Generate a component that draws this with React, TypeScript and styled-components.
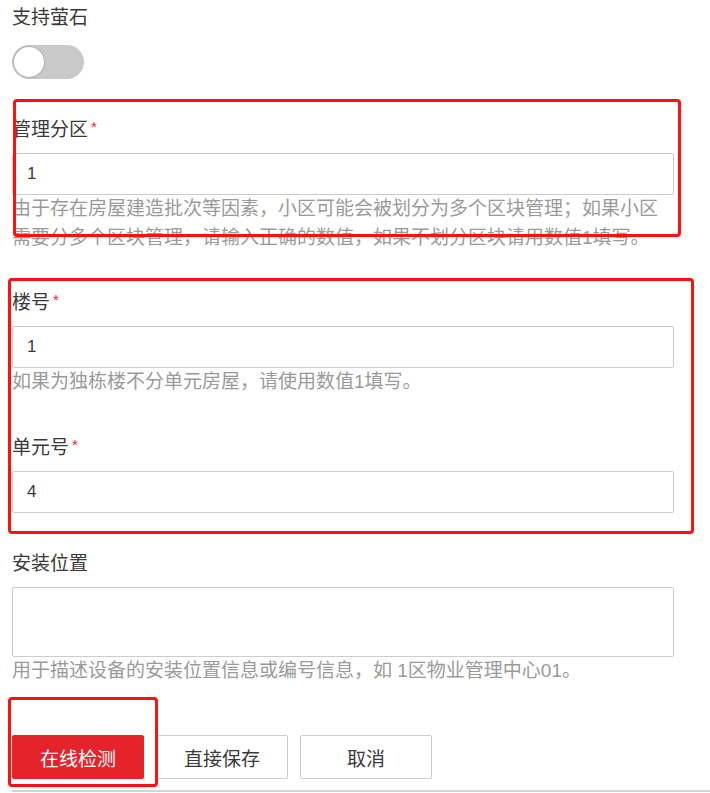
import React, { useState } from 'react';
import styled, { createGlobalStyle } from 'styled-components'

const GlobalStyle = createGlobalStyle`
  html, body {
    margin: 0;
    padding: 0;
    background: #fff;
  }
  body {
    font-family: "Liberation Sans", "Noto Sans CJK SC", sans-serif;
  }
`

const red = '#e5232a'
const textColor = '#3a3a3a'
const helpColor = '#9a9a9a'
const borderColor = '#cccccc'

const Page = styled.div`
  position: relative;
  width: 710px;
  box-sizing: border-box;
  padding: 4px 36px 0 12px;
  color: ${textColor};
`

const FormItem = styled.div`
  margin-bottom: 37px;
`

const Label = styled.div`
  font-size: 19px;
  line-height: 28px;
  height: 28px;
  margin-bottom: 9px;
  color: ${textColor};
`

const Required = styled.span`
  color: #f5222d;
  font-size: 15px;
  line-height: 0;
  margin-left: 3px;
  vertical-align: 4px;
`

const TextInput = styled.input`
  display: block;
  width: 100%;
  height: 42px;
  box-sizing: border-box;
  border: 1px solid ${borderColor};
  border-radius: 2px;
  padding: 0 14px;
  font-family: inherit;
  font-size: 17px;
  color: ${textColor};
  outline: none;
`

const TextArea = styled.textarea`
  display: block;
  width: 100%;
  height: 70px;
  box-sizing: border-box;
  border: 1px solid ${borderColor};
  border-radius: 2px;
  padding: 8px 14px;
  font-family: inherit;
  font-size: 17px;
  resize: none;
  outline: none;
`

const Help = styled.div`
  font-size: 19px;
  line-height: 28.5px;
  color: ${helpColor};
`

const SwitchTrack = styled.button<{ $on: boolean }>`
  display: block;
  margin-top: 13px;
  width: 72px;
  height: 34px;
  border: none;
  border-radius: 17px;
  padding: 2px;
  background: ${({ $on }) => ($on ? red : '#c9c9c9')};
  cursor: pointer;
  box-sizing: border-box;
`

const SwitchKnob = styled.span<{ $on: boolean }>`
  display: block;
  width: 30px;
  height: 30px;
  border-radius: 50%;
  background: #fff;
  box-shadow: 0 0 1px 1px rgba(0, 0, 0, 0.12);
  transform: translateX(${({ $on }) => ($on ? '38px' : '0')});
  transition: transform 0.2s;
`

const ButtonRow = styled.div`
  display: flex;
  gap: 12px;
  margin: 50px -36px 0 0;
  padding-bottom: 11px;
  border-bottom: 2px solid #d4d4d4;
`

const Btn = styled.button<{ $primary?: boolean }>`
  width: 132px;
  height: 44px;
  box-sizing: border-box;
  border-radius: 2px;
  border: 1px solid ${({ $primary }) => ($primary ? red : borderColor)};
  background: ${({ $primary }) => ($primary ? red : '#fff')};
  color: ${({ $primary }) => ($primary ? '#fff' : textColor)};
  font-family: inherit;
  font-size: 19px;
  cursor: pointer;
`

const Highlight = styled.div<{ $top: number, $left: number, $w: number, $h: number }>`
  position: absolute;
  top: ${({ $top }) => $top}px;
  left: ${({ $left }) => $left}px;
  width: ${({ $w }) => $w}px;
  height: ${({ $h }) => $h}px;
  box-sizing: border-box;
  border: 3px solid #ff1010;
  border-radius: 4px;
  pointer-events: none;
`

type FieldProps = {
  label: string,
  required?: boolean,
  help?: string,
  children: React.ReactNode
}

const Field: React.FC<FieldProps> = ({ label, required, help, children }) => (
  <FormItem>
    <Label>
      {label}
      {required && <Required>*</Required>}
    </Label>
    {children}
    {help && <Help>{help}</Help>}
  </FormItem>
)

const App: React.FC = () => {
  const [ezviz, setEzviz] = useState(false)
  const [zone, setZone] = useState('1')
  const [building, setBuilding] = useState('1')
  const [unit, setUnit] = useState('4')
  const [place, setPlace] = useState('')

  return (
    <>
      <GlobalStyle />
      <Page>
        <FormItem>
          <Label>支持萤石</Label>
          <SwitchTrack $on={ezviz} onClick={() => setEzviz(!ezviz)}>
            <SwitchKnob $on={ezviz} />
          </SwitchTrack>
        </FormItem>

        <Field label="管理分区" required
          help="由于存在房屋建造批次等因素，小区可能会被划分为多个区块管理；如果小区需要分多个区块管理，请输入正确的数值，如果不划分区块请用数值1填写。">
          <TextInput value={zone} onChange={(e) => setZone(e.target.value)} />
        </Field>

        <Field label="楼号" required help="如果为独栋楼不分单元房屋，请使用数值1填写。">
          <TextInput value={building} onChange={(e) => setBuilding(e.target.value)} />
        </Field>

        <Field label="单元号" required>
          <TextInput value={unit} onChange={(e) => setUnit(e.target.value)} />
        </Field>

        <Field label="安装位置" help="用于描述设备的安装位置信息或编号信息，如 1区物业管理中心01。">
          <TextArea value={place} onChange={(e) => setPlace(e.target.value)} />
        </Field>

        <ButtonRow>
          <Btn $primary>在线检测</Btn>
          <Btn>直接保存</Btn>
          <Btn>取消</Btn>
        </ButtonRow>

        <Highlight $top={99} $left={13} $w={668} $h={138} />
        <Highlight $top={278} $left={8} $w={686} $h={256} />
        <Highlight $top={697} $left={8} $w={150} $h={90} />
      </Page>
    </>
  )
}

export default App
